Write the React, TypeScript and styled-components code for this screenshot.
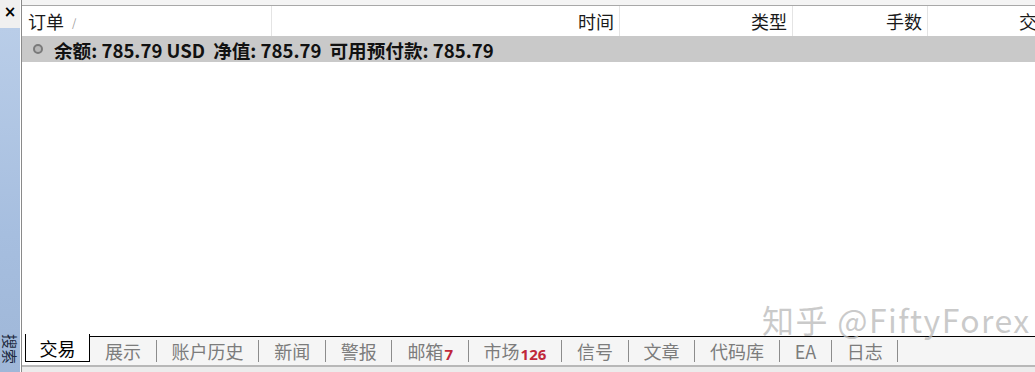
import React from "react";
import styled, { createGlobalStyle } from "styled-components";

const Global = createGlobalStyle`
  html, body { margin: 0; padding: 0; background: #ffffff; }
  body { font-family: "Noto Sans CJK SC", "Noto Sans", sans-serif; }
  #root { width: 1035px; height: 372px; overflow: hidden; }
`;

const Frame = styled.div`
  position: relative;
  display: flex;
  width: 1035px;
  height: 372px;
  background: #f0f0f0;
  overflow: hidden;
`;

const Sidebar = styled.div`
  width: 20px;
  flex: none;
  display: flex;
  flex-direction: column;
  border-right: 1px solid #ffffff;
`;

const CloseArea = styled.div`
  height: 28px;
  display: flex;
  justify-content: center;
  padding-top: 3px;
  box-sizing: border-box;
  font-family: "DejaVu Sans", sans-serif;
  font-weight: bold;
  font-size: 15px;
  line-height: 18px;
  color: #000;
  background: #f0f0f0;
`;

const BlueStrip = styled.div`
  flex: 1;
  display: flex;
  flex-direction: column;
  justify-content: flex-end;
  align-items: center;
  padding-bottom: 8px;
  background: linear-gradient(180deg, #b9cde8 0%, #a6bedf 60%, #9fb7d8 100%);
`;

const VerticalText = styled.div`
  writing-mode: vertical-rl;
  text-orientation: sideways;
  font-size: 15px;
  line-height: 18px;
  color: #202a40;
`;

const Main = styled.div`
  flex: 1;
  min-width: 0;
  display: flex;
  flex-direction: column;
  border-left: 1px solid #8a8a8a;
  padding-top: 5px;
  background: #f4f4f4;
  overflow: hidden;
`;

const Header = styled.div`
  display: grid;
  grid-template-columns: 250px 348px 173px 135px 169px;
  height: 31px;
  background: #ffffff;
  border-top: 1px solid #a8a8a8;
  box-sizing: border-box;
`;

const HeadCell = styled.div<{ $align?: "left" | "right" }>`
  display: flex;
  align-items: center;
  justify-content: ${(p) => (p.$align === "right" ? "flex-end" : "flex-start")};
  padding: 0 5px 0 6px;
  font-size: 18px;
  color: #1a1a1a;
  border-right: 1px solid #e4e4e4;
  overflow: hidden;
  white-space: nowrap;
`;

const SortMark = styled.span`
  font-size: 11px;
  color: #999;
  margin-left: 8px;
  margin-top: 2px;
`;

const Summary = styled.div`
  height: 26px;
  display: flex;
  align-items: center;
  gap: 8px;
  padding-left: 11px;
  background: #c9c9c9;
  font-family: "Noto Sans CJK SC", "Noto Sans", sans-serif;
  font-weight: bold;
  font-size: 18.6px;
  color: #111;
  white-space: nowrap;
`;

const Dot = styled.span`
  width: 10px;
  height: 10px;
  border-radius: 50%;
  border: 2px solid #7a7a7a;
  background: #b8b8b8;
  box-sizing: border-box;
  margin-right: 3px;
`;

const Body = styled.div`
  flex: 1;
  background: #ffffff;
`;

const TabBar = styled.div`
  height: 29px;
  flex: none;
  display: flex;
  align-items: stretch;
  padding-left: 3px;
  background: #ffffff;
  border-bottom: 2px solid #b8b8b8;
`;

const ActiveTab = styled.div`
  width: 65px;
  display: flex;
  justify-content: center;
  align-items: center;
  margin-top: -2px;
  margin-bottom: 3px;
  background: #ffffff;
  border-left: 1px solid #000;
  border-right: 1px solid #000;
  border-bottom: 1px solid #000;
  box-sizing: border-box;
  font-size: 18px;
  color: #000;
`;

const Rest = styled.div`
  flex: 1;
  display: flex;
  align-items: center;
  border-top: 1px solid #000;
  background: #f5f5f5;
`;

const Tab = styled.div`
  display: flex;
  align-items: center;
  height: 22px;
  padding: 0 14.6px 0 15px;
  border-right: 1px solid #8c8c8c;
  font-size: 18px;
  color: #7c7c7c;
  white-space: nowrap;
`;

const Badge = styled.span`
  font-family: "Noto Sans", sans-serif;
  font-weight: bold;
  font-size: 15px;
  color: #c0283a;
  margin-left: 1px;
  margin-top: 6px;
`;

const Footer = styled.div`
  height: 5px;
  flex: none;
  background: #ececec;
`;

const Watermark = styled.div`
  position: absolute;
  left: 762px;
  top: 296px;
  font-family: "Noto Sans CJK SC", "Noto Sans", sans-serif;
  font-size: 32px;
  color: rgba(185, 185, 185, 0.75);
  white-space: nowrap;
  letter-spacing: 1.4px;
  pointer-events: none;
`;

const tabs: { label: string; badge?: string }[] = [
  { label: "展示" },
  { label: "账户历史" },
  { label: "新闻" },
  { label: "警报" },
  { label: "邮箱", badge: "7" },
  { label: "市场", badge: "126" },
  { label: "信号" },
  { label: "文章" },
  { label: "代码库" },
  { label: "EA" },
  { label: "日志" },
];

export default function App() {
  return (
    <Frame>
      <Global />
      <Sidebar>
        <CloseArea>×</CloseArea>
        <BlueStrip>
          <VerticalText>搜索</VerticalText>
        </BlueStrip>
      </Sidebar>
      <Main>
        <Header>
          <HeadCell>
            订单<SortMark>/</SortMark>
          </HeadCell>
          <HeadCell $align="right">时间</HeadCell>
          <HeadCell $align="right">类型</HeadCell>
          <HeadCell $align="right">手数</HeadCell>
          <HeadCell $align="right">交易品种</HeadCell>
        </Header>
        <Summary>
          <Dot />
          <span>余额: 785.79 USD</span>
          <span>净值: 785.79</span>
          <span>可用预付款: 785.79</span>
        </Summary>
        <Body />
        <TabBar>
          <ActiveTab>交易</ActiveTab>
          <Rest>
            {tabs.map((t) => (
              <Tab key={t.label}>
                {t.label}
                {t.badge && <Badge>{t.badge}</Badge>}
              </Tab>
            ))}
          </Rest>
        </TabBar>
        <Footer />
      </Main>
      <Watermark>知乎 @FiftyForex</Watermark>
    </Frame>
  );
}
